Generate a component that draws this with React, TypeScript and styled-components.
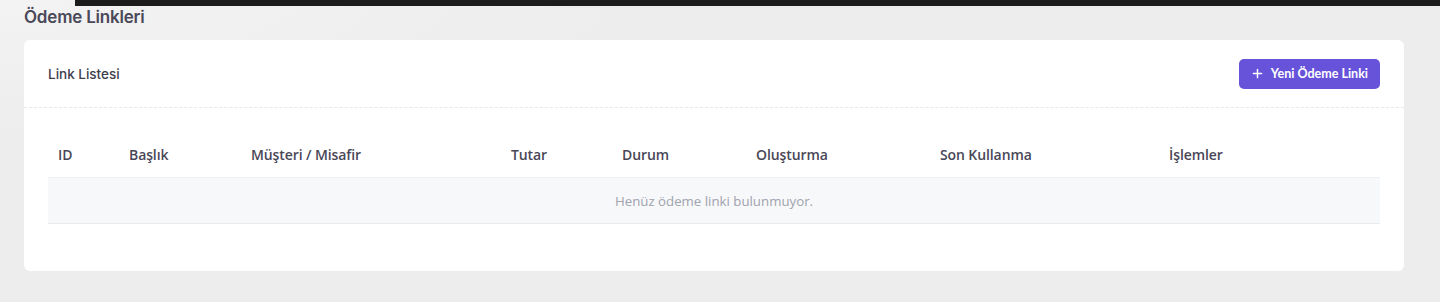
import React from "react";
import styled, { createGlobalStyle } from "styled-components";

const GlobalStyle = createGlobalStyle`
  html, body {
    margin: 0;
    padding: 0;
    background: #ededed;
    font-family: "Open Sans", "Noto Sans", sans-serif;
    color: #4b4a5a;
  }
`;

const Page = styled.div`
  position: relative;
  min-height: 302px;
  padding: 0 36px 0 24px;
  box-sizing: border-box;
  background: radial-gradient(ellipse at 0% 0%, #f3f3f3 0%, #ededed 30%);
`;

// strip of the top bar that overlaps the page
const TopStrip = styled.div`
  position: absolute;
  top: 0;
  left: 75px;
  right: 0;
  height: 6px;
  background: #1c1c1c;
`;

const PageTitle = styled.h4`
  margin: 0;
  padding-top: 7px;
  height: 40px;
  box-sizing: border-box;
  font-family: "Inter", "Noto Sans", sans-serif;
  font-size: 17px;
  font-weight: 600;
  color: #4a4859;
  letter-spacing: -0.2px;
`;

const Card = styled.div`
  background: #fff;
  border-radius: 6px;
  height: 231px;
`;

const CardHeader = styled.div`
  display: flex;
  align-items: center;
  justify-content: space-between;
  height: 67px;
  padding: 0 24px;
  border-bottom: 1px dashed #e8e8ec;
`;

const CardTitle = styled.span`
  font-family: "Inter", "Noto Sans", sans-serif;
  font-size: 13.5px;
  font-weight: 500;
  color: #3f3e4d;
`;

const AddButton = styled.button`
  display: flex;
  align-items: center;
  gap: 8px;
  height: 30px;
  padding: 0 12px 0 13px;
  border: none;
  border-radius: 5px;
  background: #6753da;
  color: #fff;
  font-family: "Lato", "Open Sans", sans-serif;
  font-size: 12.5px;
  font-weight: 700;
  cursor: pointer;
  svg {
    width: 11px;
    height: 11px;
  }
`;

const CardBody = styled.div`
  padding: 24px 24px 0;
`;

const Table = styled.table`
  width: 100%;
  border-collapse: collapse;
  table-layout: fixed;
`;

const Th = styled.th`
  text-align: left;
  height: 45px;
  padding: 0 10px;
  font-size: 14px;
  font-weight: 600;
  color: #494757;
  border-bottom: 1px solid #eef0f3;
  letter-spacing: -0.1px;
`;

const EmptyCell = styled.td`
  height: 45px;
  padding: 0;
  background: #f7f8fa;
  text-align: center;
  font-size: 13.25px;
  color: #9fa3ae;
  border-bottom: 1px solid #e9ebf0;
`;

const columns: { label: string; width: number }[] = [
  { label: "ID", width: 71 },
  { label: "Başlık", width: 122 },
  { label: "Müşteri / Misafir", width: 260 },
  { label: "Tutar", width: 111 },
  { label: "Durum", width: 134 },
  { label: "Oluşturma", width: 184 },
  { label: "Son Kullanma", width: 229 },
  { label: "İşlemler", width: 221 },
];

function App() {
  return (
    <>
      <GlobalStyle />
      <Page>
        <TopStrip />
        <PageTitle>Ödeme Linkleri</PageTitle>
        <Card>
          <CardHeader>
            <CardTitle>Link Listesi</CardTitle>
            <AddButton>
              <svg viewBox="0 0 12 12" fill="none" stroke="#fff" strokeWidth="1.6" strokeLinecap="round">
                <path d="M6 1.5v9M1.5 6h9" />
              </svg>
              Yeni Ödeme Linki
            </AddButton>
          </CardHeader>
          <CardBody>
            <Table>
              <colgroup>
                {columns.map((c) => (
                  <col key={c.label} style={{ width: c.width }} />
                ))}
              </colgroup>
              <thead>
                <tr>
                  {columns.map((c) => (
                    <Th key={c.label}>{c.label}</Th>
                  ))}
                </tr>
              </thead>
              <tbody>
                <tr>
                  <EmptyCell colSpan={columns.length}>Henüz ödeme linki bulunmuyor.</EmptyCell>
                </tr>
              </tbody>
            </Table>
          </CardBody>
        </Card>
      </Page>
    </>
  );
}

export default App;
